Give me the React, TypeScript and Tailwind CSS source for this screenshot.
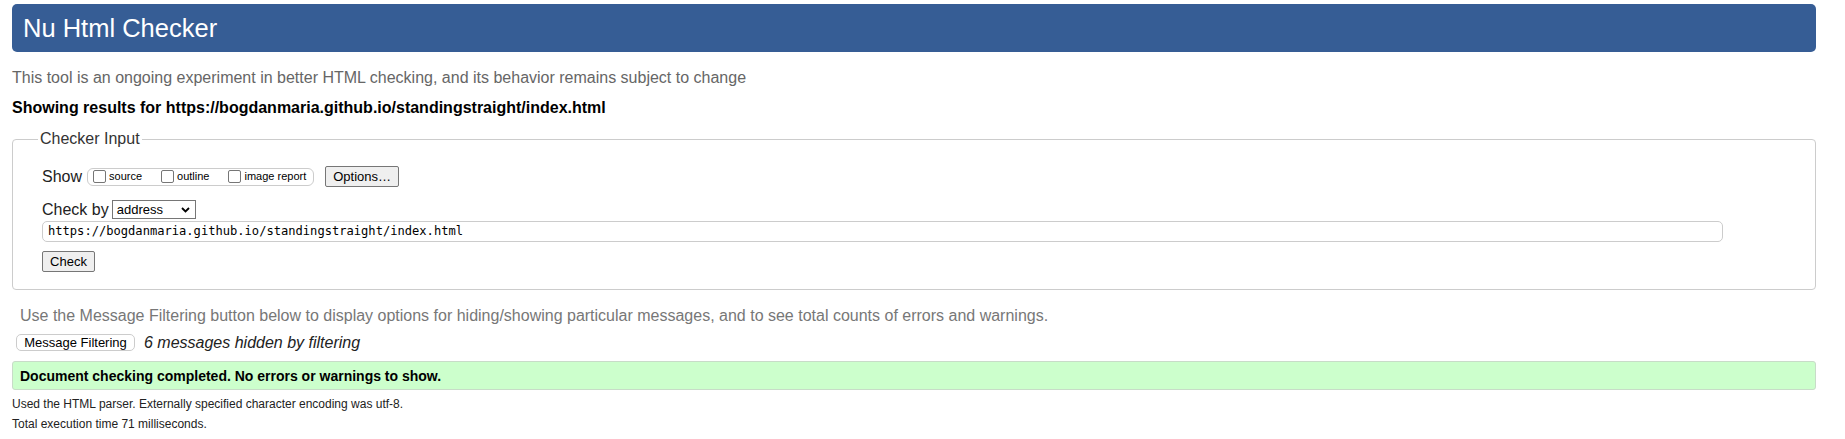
import React from "react";

const Checkbox = ({ label }: { label: string }) => (
  <span className="flex items-center">
    <span className="block w-[13px] h-[13px] border border-[#767676] rounded-[2px] bg-white" />
    <span className="ml-[3px] text-[11px] leading-[13px] text-black">{label}</span>
  </span>
);

export default function App() {
  return (
    <div
      className="bg-white w-[1845px] min-h-[439px] pl-[12px] pr-[29px] pt-[4px] text-black"
      style={{ fontFamily: '"Liberation Sans", Arial, sans-serif' }}
    >
      <div className="h-[48px] rounded-[5px] bg-[#365d95] flex items-center pl-[11px]">
        <h1 className="text-[25.5px] leading-[30px] text-white font-normal">Nu Html Checker</h1>
      </div>

      <p className="mt-[16px] text-[16px] leading-[20px] text-[#666666]">
        This tool is an ongoing experiment in better HTML checking, and its behavior remains subject to change
      </p>

      <p className="mt-[10px] text-[16px] leading-[20px] font-bold text-black">
        Showing results for https://bogdanmaria.github.io/standingstraight/index.html
      </p>

      <fieldset className="mt-[11px] border border-[#cccccc] rounded-[4px] px-[29px] pt-[17px] pb-[17px]">
        <legend className="ml-[-4px] px-[2px] text-[16px] leading-[20px] text-[#333333]">Checker Input</legend>

        <div className="flex items-center h-[21px]">
          <span className="text-[16px] leading-[20px] text-[#222222]">Show</span>
          <div className="ml-[5px] h-[18px] flex items-center gap-[19px] border border-[#cccccc] rounded-[6px] pl-[5px] pr-[7px]">
            <Checkbox label="source" />
            <Checkbox label="outline" />
            <Checkbox label="image report" />
          </div>
          <button className="ml-[11px] h-[21px] px-[7px] bg-[#efefef] border border-[#767676] rounded-[2px] text-[13px] leading-[15px] text-black">
            Options…
          </button>
        </div>

        <div className="mt-[13px] flex items-center h-[19px]">
          <span className="text-[16px] leading-[19px] text-[#222222]">Check by</span>
          <div className="ml-[3px] w-[84px] h-[19px] border border-[#767676] bg-white flex items-center justify-between pl-[4px] pr-[5px]">
            <span className="text-[13px] leading-[15px] text-black">address</span>
            <svg width="9" height="6" viewBox="0 0 9 6" className="block">
              <path d="M1 1 L4.5 4.5 L8 1" fill="none" stroke="#000" strokeWidth="1.8" />
            </svg>
          </div>
        </div>

        <div className="mt-[2px] w-[1681px] h-[21px] border border-[#cccccc] rounded-[5px] flex items-center pl-[5px]">
          <span
            className="text-[12.1px] leading-[15px] text-black"
            style={{ fontFamily: '"DejaVu Sans Mono", "Liberation Mono", monospace' }}
          >
            https://bogdanmaria.github.io/standingstraight/index.html
          </span>
        </div>

        <div className="mt-[9px] flex">
          <button className="h-[21px] w-[53px] bg-[#efefef] border border-[#767676] rounded-[2px] text-[13px] leading-[15px] text-black">
            Check
          </button>
        </div>
      </fieldset>

      <p className="mt-[16px] pl-[8px] text-[16px] leading-[20px] text-[#777777]">
        Use the Message Filtering button below to display options for hiding/showing particular messages, and to see total counts of errors and warnings.
      </p>

      <div className="mt-[8px] flex items-center h-[17px] pl-[4px]">
        <button className="h-[17px] w-[119px] bg-white border border-[#cccccc] rounded-[5px] text-[13px] leading-[15px] text-black">
          Message Filtering
        </button>
        <span className="ml-[9px] text-[16px] leading-[17px] italic text-[#222222]">6 messages hidden by filtering</span>
      </div>

      <div className="mt-[10px] h-[29px] bg-[#ccffcc] border border-[#c8dcc8] rounded-[3px] flex items-center pl-[7px]">
        <span className="text-[14px] leading-[16px] font-bold text-black">
          Document checking completed. No errors or warnings to show.
        </span>
      </div>

      <p className="mt-[6px] text-[12px] leading-[16px] text-[#222222]">
        Used the HTML parser. Externally specified character encoding was utf-8.
      </p>
      <p className="mt-[4px] text-[12px] leading-[16px] text-[#222222]">Total execution time 71 milliseconds.</p>
    </div>
  );
}
